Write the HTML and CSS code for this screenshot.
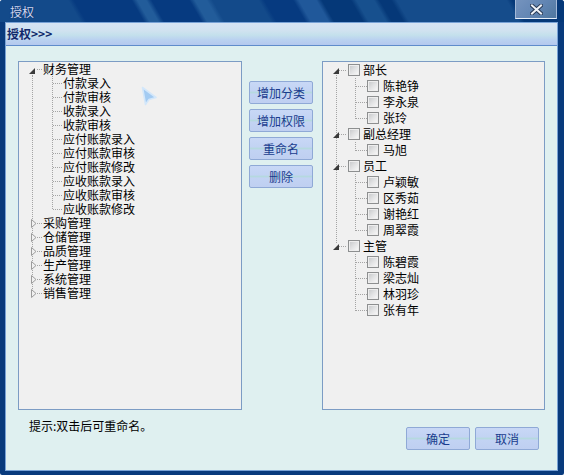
FILE: index.html
```html
<!DOCTYPE html>
<html>
<head>
<meta charset="utf-8">
<link rel="stylesheet" href="styles.css">
</head>
<body>
<div class="window">
  <div class="titlebar">
    <span class="title">授权</span>
    <button class="close" aria-label="关闭">
      <svg width="13" height="11" viewBox="0 0 13 11">
        <path d="M2 1.5 L11 9.5 M11 1.5 L2 9.5" stroke="#2a3c58" stroke-width="4" stroke-linecap="square"/>
        <path d="M2 1.5 L11 9.5 M11 1.5 L2 9.5" stroke="#eef2f8" stroke-width="2" stroke-linecap="square"/>
      </svg>
    </button>
  </div>
  <div class="client">
    <div class="header">授权&gt;&gt;&gt;</div>
    <div class="main">
      <div class="panel lt">
        <div class="row r-first"><span class="gut"><svg class="exp" width="6" height="6" viewBox="0 0 6 6"><polygon points="6,0 6,6 0,6"/></svg></span><span class="lbl">财务管理</span></div>
        <div class="row c"><span class="gut"></span><span class="lbl">付款录入</span></div>
        <div class="row c"><span class="gut"></span><span class="lbl">付款审核</span></div>
        <div class="row c"><span class="gut"></span><span class="lbl">收款录入</span></div>
        <div class="row c"><span class="gut"></span><span class="lbl">收款审核</span></div>
        <div class="row c"><span class="gut"></span><span class="lbl">应付账款录入</span></div>
        <div class="row c"><span class="gut"></span><span class="lbl">应付账款审核</span></div>
        <div class="row c"><span class="gut"></span><span class="lbl">应付账款修改</span></div>
        <div class="row c"><span class="gut"></span><span class="lbl">应收账款录入</span></div>
        <div class="row c"><span class="gut"></span><span class="lbl">应收账款审核</span></div>
        <div class="row c last"><span class="gut"></span><span class="lbl">应收账款修改</span></div>
        <div class="row r-mid"><span class="gut"><svg class="col" width="6" height="9" viewBox="0 0 6 9"><polygon points="0.5,0.5 5,4.5 0.5,8.5"/></svg></span><span class="lbl">采购管理</span></div>
        <div class="row r-mid"><span class="gut"><svg class="col" width="6" height="9" viewBox="0 0 6 9"><polygon points="0.5,0.5 5,4.5 0.5,8.5"/></svg></span><span class="lbl">仓储管理</span></div>
        <div class="row r-mid"><span class="gut"><svg class="col" width="6" height="9" viewBox="0 0 6 9"><polygon points="0.5,0.5 5,4.5 0.5,8.5"/></svg></span><span class="lbl">品质管理</span></div>
        <div class="row r-mid"><span class="gut"><svg class="col" width="6" height="9" viewBox="0 0 6 9"><polygon points="0.5,0.5 5,4.5 0.5,8.5"/></svg></span><span class="lbl">生产管理</span></div>
        <div class="row r-mid"><span class="gut"><svg class="col" width="6" height="9" viewBox="0 0 6 9"><polygon points="0.5,0.5 5,4.5 0.5,8.5"/></svg></span><span class="lbl">系统管理</span></div>
        <div class="row r-last"><span class="gut"><svg class="col" width="6" height="9" viewBox="0 0 6 9"><polygon points="0.5,0.5 5,4.5 0.5,8.5"/></svg></span><span class="lbl">销售管理</span></div>
      </div>
      <div class="actions">
        <button class="btn">增加分类</button>
        <button class="btn">增加权限</button>
        <button class="btn">重命名</button>
        <button class="btn">删除</button>
      </div>
      <div class="panel rt">
        <div class="row r-first"><span class="gut"><svg class="exp" width="6" height="6" viewBox="0 0 6 6"><polygon points="6,0 6,6 0,6"/></svg></span><span class="cb"></span><span class="lbl">部长</span></div>
        <div class="row c"><span class="gut"></span><span class="cb"></span><span class="lbl">陈艳铮</span></div>
        <div class="row c"><span class="gut"></span><span class="cb"></span><span class="lbl">李永泉</span></div>
        <div class="row c last"><span class="gut"></span><span class="cb"></span><span class="lbl">张玲</span></div>
        <div class="row r-mid"><span class="gut"><svg class="exp" width="6" height="6" viewBox="0 0 6 6"><polygon points="6,0 6,6 0,6"/></svg></span><span class="cb"></span><span class="lbl">副总经理</span></div>
        <div class="row c last"><span class="gut"></span><span class="cb"></span><span class="lbl">马旭</span></div>
        <div class="row r-mid"><span class="gut"><svg class="exp" width="6" height="6" viewBox="0 0 6 6"><polygon points="6,0 6,6 0,6"/></svg></span><span class="cb"></span><span class="lbl">员工</span></div>
        <div class="row c"><span class="gut"></span><span class="cb"></span><span class="lbl">卢颖敏</span></div>
        <div class="row c"><span class="gut"></span><span class="cb"></span><span class="lbl">区秀茹</span></div>
        <div class="row c"><span class="gut"></span><span class="cb"></span><span class="lbl">谢艳红</span></div>
        <div class="row c last"><span class="gut"></span><span class="cb"></span><span class="lbl">周翠霞</span></div>
        <div class="row r-last"><span class="gut"><svg class="exp" width="6" height="6" viewBox="0 0 6 6"><polygon points="6,0 6,6 0,6"/></svg></span><span class="cb"></span><span class="lbl">主管</span></div>
        <div class="row c nr"><span class="gut"></span><span class="cb"></span><span class="lbl">陈碧霞</span></div>
        <div class="row c nr"><span class="gut"></span><span class="cb"></span><span class="lbl">梁志灿</span></div>
        <div class="row c nr"><span class="gut"></span><span class="cb"></span><span class="lbl">林羽珍</span></div>
        <div class="row c nr last"><span class="gut"></span><span class="cb"></span><span class="lbl">张有年</span></div>
      </div>
    </div>
    <div class="footer">
      <span class="hint">提示:双击后可重命名。</span>
      <div class="dlg-btns">
        <button class="btn">确定</button>
        <button class="btn">取消</button>
      </div>
    </div>
  </div>
  <svg class="cursor" width="22" height="24" viewBox="0 0 22 24">
    <polygon points="2.5,2.5 16,12.5 9,14.5 5.5,19.5" fill="#a3cbf2" stroke="#d3e7fa" stroke-width="1.6" stroke-linejoin="round"/>
  </svg>
</div>
</body>
</html>
```

FILE: styles.css
```css
:root {
  --dv: repeating-linear-gradient(to bottom, #a4a4a4 0 1px, transparent 1px 2px);
  --dh: repeating-linear-gradient(to right, #a4a4a4 0 1px, transparent 1px 2px);
}

body {
  margin: 0;
  background: #ffffff;
  font-family: "Noto Sans CJK SC", "Liberation Sans", sans-serif;
  font-size: 12px;
  color: #000;
}

.window {
  position: relative;
  width: 564px;
  height: 475px;
  background: #083a7c;
  display: flex;
  flex-direction: column;
  border-radius: 3px 3px 2px 2px;
  overflow: hidden;
}

.titlebar {
  height: 22px;
  flex: none;
  display: flex;
  align-items: flex-start;
  background: linear-gradient(60deg,
    #134a8a 0 14%, #063a80 15% 25%, #225c9a 26% 27.5%, #063a80 28.5% 35%,
    #225c9a 36% 38%, #134a8a 39% 47%, #063a80 48% 53%, #20589a 54% 57%,
    #053878 58% 63%, #17508e 64% 67%, #053878 68% 70%, #154c8b 71% 90%,
    #053878 91% 100%);
}

.title {
  color: #cfd8f6;
  margin: 5px 0 0 10px;
  line-height: 14px;
  text-shadow: 0 0 1px #001a40;
}

.close {
  margin-left: auto;
  margin-right: 7px;
  width: 42px;
  height: 19px;
  box-sizing: border-box;
  border: 1px solid #a2b8d8;
  border-top: none;
  border-bottom: 1px solid #e6eef8;
  background: linear-gradient(135deg, #7593be 0%, #6185b3 55%, #50779f 100%);
  padding: 0;
  display: flex;
  align-items: center;
  justify-content: center;
}

.client {
  flex: 1;
  margin: 0 6px 4px 5px;
  background: #dff0f0;
  border: 1px solid #78a2d6;
  display: flex;
  flex-direction: column;
}

.header {
  height: 22px;
  flex: none;
  border-bottom: 1px solid #5f8ccb;
  background: linear-gradient(to bottom, #d6e4f4 0%, #d0e2f0 35%, #c4e0ec 55%, #bad2f0 75%, #b4c8ee 100%);
  font-weight: bold;
  color: #12296b;
  line-height: 22px;
  padding-left: 1px;
}

.main {
  display: flex;
  padding: 15px 12px 0 12px;
}

.panel {
  height: 349px;
  box-sizing: border-box;
  border: 1px solid #7c9cc4;
  background: #f0f0f0;
  flex: none;
}

.lt { width: 224px; }
.rt { width: 223px; margin-left: 9px; }

.row {
  display: flex;
  align-items: center;
  white-space: nowrap;
}

.gut {
  display: block;
  flex: none;
  background-repeat: no-repeat;
}

.lbl { line-height: 14px; }

/* left tree */
.lt .row { height: 14px; }
.lt .gut { width: 24px; height: 14px; }
.lt .c .gut { width: 44px; }

.lt .r-first .gut {
  background-image: var(--dh), var(--dv);
  background-position: 18px 7px, 13px 9px;
  background-size: 6px 1px, 1px 5px;
}
.lt .r-mid .gut {
  background-image: var(--dh), var(--dv);
  background-position: 18px 7px, 13px 0;
  background-size: 6px 1px, 1px 14px;
}
.lt .r-last .gut {
  background-image: var(--dh), var(--dv);
  background-position: 18px 7px, 13px 0;
  background-size: 6px 1px, 1px 8px;
}
.lt .c .gut {
  background-image: var(--dv), var(--dv), var(--dh);
  background-position: 13px 0, 33px 0, 34px 7px;
  background-size: 1px 14px, 1px 14px, 9px 1px;
}
.lt .c.last .gut {
  background-size: 1px 14px, 1px 8px, 9px 1px;
}

.exp {
  display: block;
  margin: 6px 0 0 10px;
  fill: #3a3a3a;
}
.col {
  display: block;
  margin: 3px 0 0 12px;
  fill: #f0f0f0;
  stroke: #9c9c9c;
  stroke-width: 1;
}

/* right tree */
.rt .row { height: 16px; }
.rt .gut { width: 25px; height: 16px; }
.rt .c .gut { width: 44px; }

.rt .r-first .gut {
  background-image: var(--dh), var(--dv);
  background-position: 16px 8px, 13px 11px;
  background-size: 8px 1px, 1px 5px;
}
.rt .r-mid .gut {
  background-image: var(--dh), var(--dv);
  background-position: 16px 8px, 13px 0;
  background-size: 8px 1px, 1px 16px;
}
.rt .r-last .gut {
  background-image: var(--dh), var(--dv);
  background-position: 16px 8px, 13px 0;
  background-size: 8px 1px, 1px 6px;
}
.rt .c .gut {
  background-image: var(--dv), var(--dv), var(--dh);
  background-position: 13px 0, 32px 0, 33px 8px;
  background-size: 1px 16px, 1px 16px, 11px 1px;
}
.rt .c.last .gut {
  background-size: 1px 16px, 1px 9px, 11px 1px;
}
.rt .c.nr .gut {
  background-image: var(--dv), var(--dh);
  background-position: 32px 0, 33px 8px;
  background-size: 1px 16px, 11px 1px;
}
.rt .c.nr.last .gut {
  background-size: 1px 9px, 11px 1px;
}

.cb {
  flex: none;
  width: 12px;
  height: 12px;
  box-sizing: border-box;
  border: 1px solid #8d8f90;
  background: linear-gradient(135deg, #c4c6c8 0%, #e2e3e4 50%, #fbfbfb 100%);
  box-shadow: inset 0 0 0 1px #eeeeee;
  margin-right: 3px;
}
.rt .c .cb { margin-right: 4px; }

/* buttons */
.actions {
  flex: none;
  width: 64px;
  margin-left: 7px;
  padding-top: 20px;
  display: flex;
  flex-direction: column;
  gap: 5px;
}

.btn {
  width: 64px;
  height: 23px;
  box-sizing: border-box;
  padding: 0;
  border: 1px solid #8fa9d6;
  border-radius: 2px;
  background: linear-gradient(to bottom, #c8d8f6 0%, #c2d3f3 42%, #b5d9df 50%, #c2d3f3 58%, #bfcff1 100%);
  color: #193c8e;
  font-family: "Noto Sans CJK SC", "Liberation Sans", sans-serif;
  font-size: 12px;
  line-height: 20px;
}

.footer {
  display: flex;
  align-items: flex-start;
  padding: 0 18px 0 23px;
}

.hint {
  margin-top: 9px;
  line-height: 14px;
}

.dlg-btns {
  margin-left: auto;
  margin-top: 17px;
  display: flex;
  gap: 5px;
}

.cursor {
  position: absolute;
  left: 140px;
  top: 85px;
}
```
